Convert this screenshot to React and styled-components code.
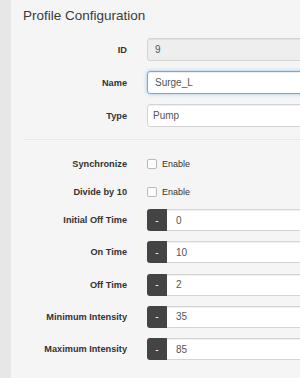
import React from 'react';
import styled, { createGlobalStyle } from 'styled-components';

const Global = createGlobalStyle`
  html, body {
    margin: 0;
    padding: 0;
    background: #e7e7e7;
    overflow: hidden;
  }
  body {
    font-family: "Liberation Sans", Arial, sans-serif;
    color: #333;
  }
`;

const Page = styled.div`
  display: flex;
  width: 300px;
  height: 378px;
  overflow: hidden;
`;

const Strip = styled.div`
  width: 11px;
  flex: none;
  background: #e7e7e7;
`;

const Panel = styled.div`
  flex: 1;
  background: #f5f5f5;
  padding: 7px 0 0 12px;
  overflow: hidden;
`;

const Title = styled.h2`
  margin: 0 0 13px;
  font-size: 13.5px;
  line-height: 18px;
  font-weight: normal;
  color: #3a3a3a;
  white-space: nowrap;
`;

const Section = styled.div`
  display: flex;
  flex-direction: column;
  gap: ${p => p.gap}px;
  margin-top: ${p => p.top || 0}px;
`;

const Row = styled.div`
  display: grid;
  grid-template-columns: 104px 1fr;
  column-gap: 20px;
  align-items: center;
  height: ${p => p.h}px;
`;

const Label = styled.label`
  text-align: right;
  font-size: 9.2px;
  font-weight: bold;
  color: #333;
  white-space: nowrap;
`;

const Input = styled.div`
  box-sizing: border-box;
  width: 190px;
  height: 23px;
  display: flex;
  align-items: center;
  padding-left: ${p => (p.select ? 5 : 7)}px;
  font-size: 10px;
  color: #555;
  background: ${p => (p.disabled ? '#eeeeee' : '#fff')};
  border: 1px solid ${p => (p.focus ? '#66afe9' : '#d4d4d4')};
  border-radius: 3px;
  box-shadow: ${p =>
    p.focus
      ? 'inset 0 1px 1px rgba(0,0,0,.075), 0 0 4px rgba(102,175,233,.6)'
      : 'inset 0 1px 1px rgba(0,0,0,.06)'};
`;

const Divider = styled.hr`
  border: 0;
  border-top: 1px solid #e8e8e8;
  margin: 12px 0 15px;
`;

const Check = styled.span`
  display: flex;
  align-items: center;
  gap: 5px;
  font-size: 9px;
  color: #333;
`;

const Box = styled.span`
  box-sizing: border-box;
  width: 10px;
  height: 10px;
  background: #fff;
  border: 1px solid #b9b9b9;
  border-radius: 2px;
`;

const Stepper = styled.div`
  display: flex;
  height: 22px;
`;

const Minus = styled.span`
  width: 20px;
  flex: none;
  display: flex;
  align-items: center;
  justify-content: center;
  background: #444;
  color: #fff;
  font-size: 10px;
  border-radius: 3px 0 0 3px;
`;

const StepInput = styled(Input)`
  height: 22px;
  width: 180px;
  border-left: 0;
  border-radius: 0 3px 3px 0;
  padding-left: 9px;
`;

const steps = [
  ['Initial Off Time', '0'],
  ['On Time', '10'],
  ['Off Time', '2'],
  ['Minimum Intensity', '35'],
  ['Maximum Intensity', '85'],
];

export default function App() {
  return (
    <Page>
      <Global />
      <Strip />
      <Panel>
        <Title>Profile Configuration</Title>
        <Section gap={10}>
          <Row h={23}>
            <Label>ID</Label>
            <Input disabled>9</Input>
          </Row>
          <Row h={23}>
            <Label>Name</Label>
            <Input focus>Surge_L</Input>
          </Row>
          <Row h={23}>
            <Label>Type</Label>
            <Input select>Pump</Input>
          </Row>
        </Section>
        <Divider />
        <Section gap={10}>
          <Row h={18}>
            <Label>Synchronize</Label>
            <Check><Box />Enable</Check>
          </Row>
          <Row h={18}>
            <Label>Divide by 10</Label>
            <Check><Box />Enable</Check>
          </Row>
        </Section>
        <Section gap={10.3} top={8}>
          {steps.map(([label, value]) => (
            <Row h={22} key={label}>
              <Label>{label}</Label>
              <Stepper>
                <Minus>-</Minus>
                <StepInput>{value}</StepInput>
              </Stepper>
            </Row>
          ))}
        </Section>
      </Panel>
    </Page>
  );
}
